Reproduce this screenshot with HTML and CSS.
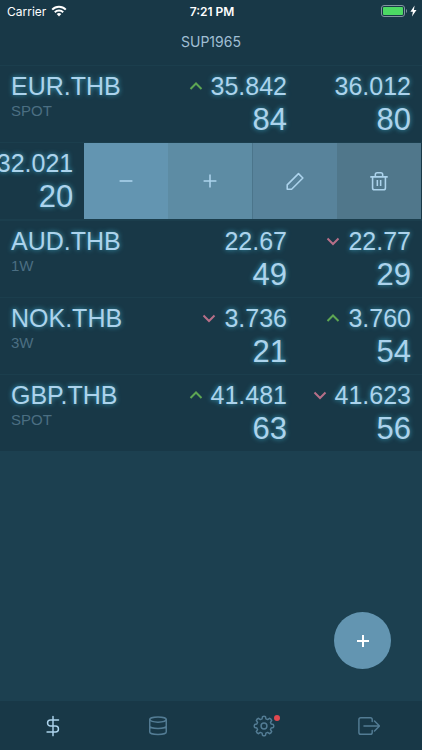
FILE: index.html
```html
<!DOCTYPE html>
<html lang="en">
  <head>
    <meta charset="UTF-8" />
    <meta name="viewport" content="width=device-width, initial-scale=1.0" />
    <title>SUP1965</title>
    <link rel="stylesheet" href="styles.css">
  </head>
  <body>
    <header class="header">
      <div class="status">
        <div class="carrier">
          <span>Carrier</span>
          <svg width="16" height="12" viewBox="0 0 16 12" fill="none" stroke="#fff" stroke-width="2">
            <path d="M1.2 4.6a9.6 9.6 0 0 1 13.6 0" />
            <path d="M3.8 7.3a5.9 5.9 0 0 1 8.4 0" />
            <path d="M8 11.4L5.7 9a3.3 3.3 0 0 1 4.6 0z" fill="#fff" stroke="none" />
          </svg>
        </div>
        <div class="time">7:21 PM</div>
        <div class="battery">
          <svg width="27" height="12" viewBox="0 0 27 12">
            <rect x="0.5" y="0.5" width="23" height="11" rx="2.5" fill="none" stroke="#8195a0" />
            <rect x="2" y="2" width="20" height="8" rx="1" fill="#4cd964" />
            <path d="M25 4v4c1.4-.5 1.4-3.500 0-4z" fill="#8195a0" />
          </svg>
          <svg width="7" height="12" viewBox="0 0 7 12">
            <path d="M4.600 .5L.4 6.700h2.500L2 11.500l4.500-6.500H3.900z" fill="#fff" />
          </svg>
        </div>
      </div>
      <h1 class="title">SUP1965</h1>
    </header>

    <main class="main">
      <ul class="list">
        <li class="row">
          <div class="pair">
            <div class="symbol">EUR.THB</div>
            <div class="tenor">SPOT</div>
          </div>
          <div class="quote">
            <div class="price">
              <svg class="arrow up" viewBox="0 0 14 10"><path d="M1.500 8L7 2.500 12.500 8" /></svg>
              <span>35.842</span>
            </div>
            <div class="pips">84</div>
          </div>
          <div class="quote">
            <div class="price"><span>36.012</span></div>
            <div class="pips">80</div>
          </div>
        </li>

        <!-- row swiped open -->
        <li class="row swiped">
          <div class="quote">
            <div class="price"><span>32.021</span></div>
            <div class="pips">20</div>
          </div>
          <div class="actions">
            <button class="action minus" type="button" aria-label="Decrease">
              <svg class="icon" viewBox="0 0 24 24"><path d="M5 12h14" /></svg>
            </button>
            <button class="action plus" type="button" aria-label="Increase">
              <svg class="icon" viewBox="0 0 24 24"><path d="M5 12h14M12 5v14" /></svg>
            </button>
            <button class="action edit" type="button" aria-label="Edit">
              <svg class="icon" viewBox="0 0 24 24"><path d="M3.500 16.200L15.800 3.900l4.800 4.800L8.300 21H3.500z" /></svg>
            </button>
            <button class="action delete" type="button" aria-label="Delete">
              <svg class="icon" viewBox="0 0 24 24">
                <path d="M2.500 7.500h19M5 7.500v12a2 2 0 0 0 2 2h10a2 2 0 0 0 2-2v-12M8 7.500V5a2 2 0 0 1 2-2h4a2 2 0 0 1 2 2v2.500M10.200 11v6.500M13.800 11v6.500" />
              </svg>
            </button>
          </div>
        </li>

        <li class="row">
          <div class="pair">
            <div class="symbol">AUD.THB</div>
            <div class="tenor">1W</div>
          </div>
          <div class="quote">
            <div class="price"><span>22.67</span></div>
            <div class="pips">49</div>
          </div>
          <div class="quote">
            <div class="price">
              <svg class="arrow down" viewBox="0 0 14 10"><path d="M1.500 2.500L7 8l5.500-5.500" /></svg>
              <span>22.77</span>
            </div>
            <div class="pips">29</div>
          </div>
        </li>

        <li class="row">
          <div class="pair">
            <div class="symbol">NOK.THB</div>
            <div class="tenor">3W</div>
          </div>
          <div class="quote">
            <div class="price">
              <svg class="arrow down" viewBox="0 0 14 10"><path d="M1.500 2.500L7 8l5.500-5.500" /></svg>
              <span>3.736</span>
            </div>
            <div class="pips">21</div>
          </div>
          <div class="quote">
            <div class="price">
              <svg class="arrow up" viewBox="0 0 14 10"><path d="M1.500 8L7 2.500 12.500 8" /></svg>
              <span>3.760</span>
            </div>
            <div class="pips">54</div>
          </div>
        </li>

        <li class="row">
          <div class="pair">
            <div class="symbol">GBP.THB</div>
            <div class="tenor">SPOT</div>
          </div>
          <div class="quote">
            <div class="price">
              <svg class="arrow up" viewBox="0 0 14 10"><path d="M1.500 8L7 2.500 12.500 8" /></svg>
              <span>41.481</span>
            </div>
            <div class="pips">63</div>
          </div>
          <div class="quote">
            <div class="price">
              <svg class="arrow down" viewBox="0 0 14 10"><path d="M1.500 2.500L7 8l5.500-5.500" /></svg>
              <span>41.623</span>
            </div>
            <div class="pips">56</div>
          </div>
        </li>
      </ul>
    </main>

    <button class="fab" type="button" aria-label="Add">
      <svg width="14" height="14" viewBox="0 0 14 14"><path d="M1 7h12M7 1v12" /></svg>
    </button>

    <nav class="tabs">
      <a class="tab active" href="#rates" aria-label="Rates">
        <svg class="tab-icon" viewBox="0 0 24 24">
          <path d="M12 1.500v21M18 5.500H9.300a3.250 3.250 0 0 0 0 6.500h5.400a3.250 3.250 0 0 1 0 6.500H5.500" />
        </svg>
      </a>
      <a class="tab" href="#data" aria-label="Data">
        <svg class="tab-icon" viewBox="0 0 24 24">
          <ellipse cx="12" cy="5" rx="9" ry="2.800" />
          <path d="M3 5v13.500c0 1.500 4 2.800 9 2.800s9-1.300 9-2.800V5M3 12c0 1.500 4 2.800 9 2.800s9-1.300 9-2.800" />
        </svg>
      </a>
      <a class="tab" href="#settings" aria-label="Settings">
        <svg class="tab-icon" viewBox="0 0 24 24">
          <circle cx="12" cy="12" r="3.200" />
          <path d="M9.900 4.200L10.400 1.800q1.600-.9 3.200 0l.5 2.400 1.900.8 2-1.400q1.800.6 2.400 2.400L19 8l.8 1.900 2.400.5q.9 1.600 0 3.200l-2.400.5L19 16l1.400 2q-.6 1.800-2.400 2.400L16 19l-1.900.8-.5 2.400q-1.600.9-3.200 0l-.5-2.400L8 19l-2 1.400q-1.800-.6-2.400-2.400L5 16l-.8-1.900-2.400-.5q-.9-1.600 0-3.200l2.400-.5L5 8 3.600 6q.6-1.800 2.400-2.400L8 5z" />
        </svg>
        <span class="badge"></span>
      </a>
      <a class="tab" href="#logout" aria-label="Log out">
        <svg class="tab-icon" viewBox="0 0 24 24">
          <path d="M15.500 7V5a2 2 0 0 0-2-2H3a2 2 0 0 0-2 2v14a2 2 0 0 0 2 2h10.500a2 2 0 0 0 2-2v-2M6.500 12h17M18 6.500l5.500 5.500-5.500 5.500" />
        </svg>
      </a>
    </nav>
  </body>
</html>
```
FILE: styles.css
```css
* {
  box-sizing: border-box;
}
body {
  display: flex;
  flex-direction: column;
  min-height: 100vh;
  margin: 0;
  background: #1c4050;
  color: #acd3ec;
  font-family: "Liberation Sans", Arial, sans-serif;
}
.header {
  height: 65px;
  background: #183847;
  font-family: Inter, sans-serif;
}
.status {
  display: grid;
  grid-template-columns: 1fr auto 1fr;
  align-items: center;
  height: 22px;
  padding: 0 5px 0 7px;
  color: #fff;
  font-size: 12px;
}
.carrier {
  display: flex;
  align-items: center;
  gap: 5px;
}
.time {
  font-weight: 600;
}
.battery {
  display: flex;
  justify-content: flex-end;
  align-items: center;
  gap: 2px;
}
.title {
  margin: 0;
  color: #a0bfd4;
  font-size: 14px;
  font-weight: 400;
  line-height: 40px;
  text-align: center;
}
.main {
  flex: 1;
}
.list {
  margin: 0;
  padding: 0;
  list-style: none;
}
.row {
  display: flex;
  height: 77px;
  padding: 3px 11px 0;
  border-top: 1px solid #1b3e4d;
  background: #183847;
}
.pair {
  flex: 1;
}
.symbol {
  font-size: 25px;
  line-height: 34px;
  text-shadow: 0 0 5px #3aa0bd;
}
.tenor {
  color: #4b6e82;
  font-size: 15px;
  line-height: 16px;
}
.quote {
  width: 124px;
  text-shadow: 0 0 5px #3aa0bd;
}
.price {
  display: flex;
  justify-content: flex-end;
  align-items: center;
  gap: 8px;
  font-size: 25px;
  line-height: 34px;
}
.pips {
  font-size: 31px;
  line-height: 34px;
  text-align: right;
}
.arrow {
  width: 14px;
  height: 10px;
  fill: none;
  stroke-width: 2;
}
.up {
  stroke: #5da653;
}
.down {
  stroke: #b66f88;
}
.swiped {
  height: 78px;
  padding: 0 1px 0 0;
  border-bottom: 1px solid #1b3e4d;
  overflow: hidden;
}
.swiped .quote {
  flex: 1;
  min-width: 0;
  padding: 3px 11px 0 0;
}
.actions {
  display: flex;
  flex: 0 0 80%;
}
.action {
  display: flex;
  flex: 1;
  justify-content: center;
  align-items: center;
  padding: 0;
  border: none;
  color: #acd3ec;
  cursor: pointer;
}
.minus {
  background: #6395b1;
}
.plus {
  background: #5d8ca4;
}
.edit {
  border-left: 1px solid #4b758b;
  background: #58839b;
}
.delete {
  background: #50778b;
}
.icon {
  width: 22px;
  height: 22px;
  fill: none;
  stroke: currentColor;
  stroke-width: 1.7;
  stroke-linejoin: round;
}
.fab {
  position: fixed;
  right: 31px;
  bottom: 81px;
  display: flex;
  justify-content: center;
  align-items: center;
  width: 57px;
  height: 57px;
  padding: 0;
  border: none;
  border-radius: 50%;
  background: #6395b1;
  cursor: pointer;
}
.fab svg {
  stroke: #fff;
  stroke-width: 2;
}
.tabs {
  display: flex;
  height: 49px;
  background: #183847;
}
.tab {
  position: relative;
  display: flex;
  flex: 1;
  justify-content: center;
  align-items: center;
  color: #537c94;
}
.active {
  color: #acd3ec;
}
.tab-icon {
  width: 22px;
  height: 22px;
  fill: none;
  stroke: currentColor;
  stroke-width: 1.6;
  stroke-linecap: round;
  stroke-linejoin: round;
}
.badge {
  position: absolute;
  top: 14px;
  left: calc(50% + 10px);
  width: 6px;
  height: 6px;
  border-radius: 50%;
  background: #e04850;
}
```
